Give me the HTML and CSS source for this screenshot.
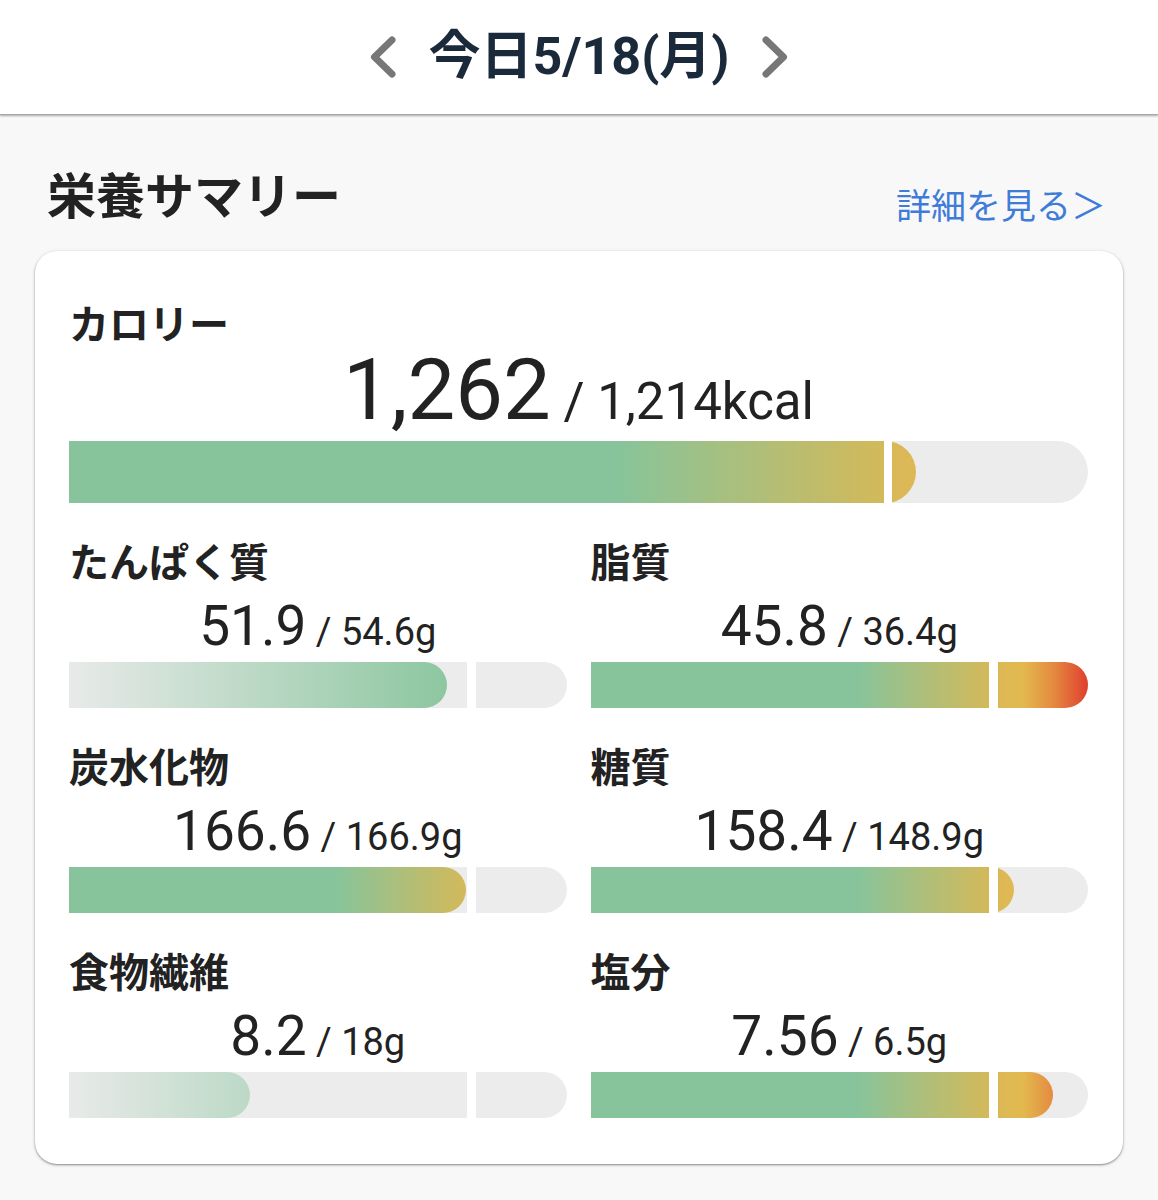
FILE: index.html
```html
<!DOCTYPE html>
<html lang="ja">
<head>
<meta charset="utf-8">
<title>栄養サマリー</title>
<link rel="stylesheet" href="styles.css">
</head>
<body>
<header class="topbar">
  <button class="nav-btn" aria-label="前の日">
    <svg class="chev" viewBox="0 0 26 42" width="26" height="42"><path d="M22 4 L4.5 21 L22 38"/></svg>
  </button>
  <h1 class="date">今日5/18(月)</h1>
  <button class="nav-btn" aria-label="次の日">
    <svg class="chev" viewBox="0 0 26 42" width="26" height="42"><path d="M4 4 L21.5 21 L4 38"/></svg>
  </button>
</header>

<main class="content">
  <div class="section-head">
    <h2 class="section-title">栄養サマリー</h2>
    <a class="more-link" href="#">詳細を見る＞</a>
  </div>

  <section class="card">
    <div class="nutrient nutrient-main">
      <div class="n-label">カロリー</div>
      <div class="n-value"><span class="cur">1,262</span><span class="goal"> / 1,214kcal</span></div>
      <div class="bar bar-lg">
        <div class="bar-target"><div class="fill fill-warn fill-full" style="width:100%"></div></div>
        <div class="bar-over"><div class="fill-over" style="width:32px"></div></div>
      </div>
    </div>

    <div class="grid">
      <div class="nutrient">
        <div class="n-label">たんぱく質</div>
        <div class="n-value"><span class="cur">51.9</span><span class="goal"> / 54.6g</span></div>
        <div class="bar bar-sm">
          <div class="bar-target"><div class="fill fill-good" style="width:95.05%;background-size:105.2% 100%"></div></div>
          <div class="bar-over"></div>
        </div>
      </div>

      <div class="nutrient">
        <div class="n-label">脂質</div>
        <div class="n-value"><span class="cur">45.8</span><span class="goal"> / 36.4g</span></div>
        <div class="bar bar-sm">
          <div class="bar-target"><div class="fill fill-warn fill-full" style="width:100%"></div></div>
          <div class="bar-over"><div class="fill-over" style="width:100px"></div></div>
        </div>
      </div>

      <div class="nutrient">
        <div class="n-label">炭水化物</div>
        <div class="n-value"><span class="cur">166.6</span><span class="goal"> / 166.9g</span></div>
        <div class="bar bar-sm">
          <div class="bar-target"><div class="fill fill-warn" style="width:99.8%;background-size:100.2% 100%"></div></div>
          <div class="bar-over"></div>
        </div>
      </div>

      <div class="nutrient">
        <div class="n-label">糖質</div>
        <div class="n-value"><span class="cur">158.4</span><span class="goal"> / 148.9g</span></div>
        <div class="bar bar-sm">
          <div class="bar-target"><div class="fill fill-warn fill-full" style="width:100%"></div></div>
          <div class="bar-over"><div class="fill-over" style="width:25.4px"></div></div>
        </div>
      </div>

      <div class="nutrient">
        <div class="n-label">食物繊維</div>
        <div class="n-value"><span class="cur">8.2</span><span class="goal"> / 18g</span></div>
        <div class="bar bar-sm">
          <div class="bar-target"><div class="fill fill-good" style="width:45.6%;background-size:219.3% 100%"></div></div>
          <div class="bar-over"></div>
        </div>
      </div>

      <div class="nutrient">
        <div class="n-label">塩分</div>
        <div class="n-value"><span class="cur">7.56</span><span class="goal"> / 6.5g</span></div>
        <div class="bar bar-sm">
          <div class="bar-target"><div class="fill fill-warn fill-full" style="width:100%"></div></div>
          <div class="bar-over"><div class="fill-over" style="width:64.9px"></div></div>
        </div>
      </div>
    </div>
  </section>
</main>
</body>
</html>
```

FILE: styles.css
```css
* {
  box-sizing: border-box;
}

html, body {
  margin: 0;
  padding: 0;
}

body {
  background: #f8f8f8;
  font-family: Roboto, "Noto Sans CJK JP", sans-serif;
  color: #222;
  min-height: 1200px;
}

/* ---------- top bar ---------- */
.topbar {
  height: 114px;
  background: #fff;
  display: flex;
  align-items: center;
  justify-content: center;
  gap: 32px;
  box-shadow: 0 1px 0 #a8a8a8, 0 2px 2px rgba(0, 0, 0, 0.32);
  position: relative;
  z-index: 1;
}

.nav-btn {
  background: none;
  border: 0;
  padding: 0;
  margin: 0;
  display: flex;
  align-items: center;
  cursor: pointer;
}

.chev {
  display: block;
}

.chev path {
  fill: none;
  stroke: #777;
  stroke-width: 7;
  stroke-linecap: round;
  stroke-linejoin: round;
}

.date {
  margin: 0;
  font-family: Roboto, "Noto Sans CJK JP", sans-serif;
  font-weight: 700;
  font-size: 52px;
  line-height: 1;
  color: #1b2a3b;
}

/* ---------- content ---------- */
.content {
  padding: 54px 35px 0;
}

.section-head {
  display: flex;
  justify-content: space-between;
  align-items: flex-end;
  padding: 0 17px 0 12px;
}

.section-title {
  margin: 0 0 4px;
  font-family: "Noto Sans CJK JP", sans-serif;
  font-weight: 700;
  font-size: 49px;
  line-height: 1;
  color: #222;
}

.more-link {
  font-family: "Noto Sans CJK JP", sans-serif;
  font-size: 35px;
  line-height: 1;
  color: #3f7cd8;
  text-decoration: none;
}

.card {
  margin-top: 30px;
  background: #fff;
  border-radius: 22px;
  padding: 51px 35px 46px 34px;
  box-shadow: 0 1px 2px rgba(0, 0, 0, 0.38), 0 1px 4px rgba(0, 0, 0, 0.12);
}

.grid {
  display: grid;
  grid-template-columns: 1fr 1fr;
  column-gap: 24px;
  row-gap: 37px;
  margin-top: 37px;
}

.nutrient {
  display: flex;
  flex-direction: column;
}

.n-label {
  font-family: "Noto Sans CJK JP", sans-serif;
  font-weight: 700;
  font-size: 40px;
  line-height: 1;
  color: #222;
}

.n-value {
  text-align: center;
  font-family: Roboto, sans-serif;
  color: #222;
  line-height: 1;
  white-space: nowrap;
  margin-top: 19px;
  font-size: 38px;
}

.n-value .cur {
  font-size: 55px;
}

.nutrient-main .n-value {
  margin-top: 6px;
  font-size: 51px;
}

.nutrient-main .n-value .cur {
  font-size: 85px;
}

/* ---------- bars ---------- */
.bar {
  display: flex;
  margin-top: 8px;
}

.bar-lg {
  height: 62px;
  gap: 8px;
}

.bar-sm {
  height: 46px;
  gap: 9px;
}

.bar-target {
  width: 80%;
  flex: none;
  background: #ececec;
  display: flex;
  overflow: hidden;
}

.bar-over {
  flex: 1;
  background: #ececec;
  display: flex;
  overflow: hidden;
}

.bar-lg .bar-over {
  border-radius: 0 31px 31px 0;
}

.bar-sm .bar-over {
  border-radius: 0 23px 23px 0;
}

.fill {
  height: 100%;
  flex: none;
  background-repeat: no-repeat;
}

.bar-lg .fill {
  border-radius: 0 31px 31px 0;
}

.bar-sm .fill {
  border-radius: 0 23px 23px 0;
}

.bar .fill-full {
  border-radius: 0;
}

.fill-good {
  background-image: linear-gradient(90deg, #e8eae9 0%, #88c59c 100%);
}

.fill-warn {
  background-image: linear-gradient(90deg, #87c49b 0%, #87c49b 67%, #d3b95a 100%);
  background-size: 100% 100%;
}

.fill-over {
  height: 100%;
  flex: none;
  background-image: linear-gradient(90deg, #d8b85a 0%, #e3b94f 34%, #e48b40 64%, #e0462f 96%);
  background-repeat: no-repeat;
}

.bar-lg .fill-over {
  margin-left: -8px;
  border-radius: 0 31px 31px 0;
  background-size: 203px 100%;
}

.bar-sm .fill-over {
  margin-left: -9px;
  border-radius: 0 23px 23px 0;
  background-size: 100px 100%;
}
```
